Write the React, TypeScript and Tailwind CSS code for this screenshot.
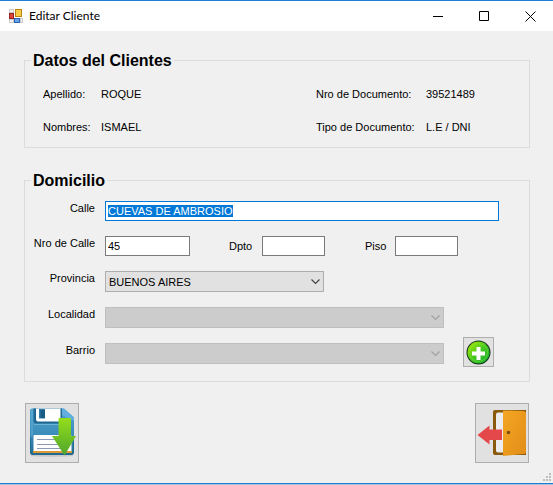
import { useEffect, useRef } from "react";
import type { ComponentProps, ReactNode } from "react";

function WindowButton({ label, children }: { label: string; children: ReactNode }) {
  return (
    <button type="button" aria-label={label} className="flex h-full w-[46px] items-center justify-center">
      <svg width="11" height="11" viewBox="0 0 11 11" fill="none" stroke="#000">
        {children}
      </svg>
    </button>
  );
}

function TitleBar() {
  return (
    <header className="flex h-[31px] items-center border-t border-[#1a7fd4] bg-white pl-[9px]">
      <svg width="14" height="14" viewBox="0 0 14 14" shapeRendering="crispEdges" aria-hidden="true">
        <path d="M0 0h5v4H0zM0 10h5v4H0zM11 9h3v5h-3z" fill="#c9c9c9" />
        <path d="M1 1h3v2H1zM1 11h3v2H1zM12 10h1v3h-1z" fill="#f4f4f4" />
        <rect x="0" y="4" width="5" height="6" fill="#9c1f1f" />
        <rect x="1" y="5" width="3" height="4" fill="#d8463c" />
        <rect x="6" y="0" width="7" height="8" fill="#b98510" />
        <rect x="7" y="1" width="5" height="6" fill="#fccb45" />
        <rect x="5" y="9" width="6" height="5" fill="#2f63b8" />
        <rect x="6" y="10" width="4" height="3" fill="#6aa0e8" />
      </svg>
      <h1 className="ml-[6px] flex-1 font-['Lato','Open_Sans',sans-serif] text-[12px] leading-4">
        Editar Cliente
      </h1>
      <WindowButton label="Minimizar">
        <path d="M0 5.5h10" />
      </WindowButton>
      <WindowButton label="Maximizar">
        <path d="M.5 .5h9v9h-9z" />
      </WindowButton>
      <WindowButton label="Cerrar">
        <path d="M.5 .5l10 10M10.500 .5l-10 10" strokeWidth="1" />
      </WindowButton>
    </header>
  );
}

function GroupBox({ title, children }: { title: string; children: ReactNode }) {
  return (
    <fieldset className="border border-[#dcdcdc]">
      <legend className="ml-[6px] px-[2px] text-[16px] leading-[19px] font-bold">
        {title}
      </legend>
      {children}
    </fieldset>
  );
}

function Field({ id, label, children }: { id: string; label: string; children: ReactNode }) {
  return (
    <div className="flex items-start gap-[10px]">
      <label htmlFor={id} className="w-[70px] shrink-0 text-right leading-[14px]">
        {label}
      </label>
      {children}
    </div>
  );
}

function TextBox({ className, ...props }: ComponentProps<"input">) {
  return (
    <input
      type="text"
      className={`h-5 border bg-white px-[2px] leading-[14px] outline-none selection:bg-[#0078d7] selection:text-white ${className}`}
      {...props}
    />
  );
}

function ComboBox({ id, value, className, disabled }: { id: string; value?: string; className: string; disabled?: boolean }) {
  return (
    <div className={`relative ${className}`}>
      <select
        id={id}
        disabled={disabled}
        className="block h-[21px] w-full appearance-none border border-[#adadad] bg-[#e1e1e1] px-[3px] leading-[14px] disabled:border-[#bfbfbf] disabled:bg-[#cccccc] disabled:opacity-100"
      >
        {value && <option>{value}</option>}
      </select>
      <svg
        className={`pointer-events-none absolute top-[8px] right-[4px] ${disabled ? "text-[#a0a0a0]" : "text-[#444444]"}`}
        width="9"
        height="6"
        viewBox="0 0 9 6"
        fill="none"
        stroke="currentColor"
        strokeWidth="1.2"
        aria-hidden="true"
      >
        <path d="M.5 .5l4 4 4-4" />
      </svg>
    </div>
  );
}

function AddIcon() {
  return (
    <svg width="25" height="25" viewBox="0 0 25 25" aria-hidden="true">
      <defs>
        <linearGradient id="add" x1="0" y1="0" x2="1" y2="1">
          <stop offset="0" stopColor="#b4f000" />
          <stop offset=".5" stopColor="#45c820" />
          <stop offset="1" stopColor="#08a838" />
        </linearGradient>
      </defs>
      <circle cx="12.5" cy="12.5" r="12" fill="#16301a" />
      <circle cx="12.5" cy="12.5" r="11" fill="url(#add)" />
      <circle cx="12.5" cy="12.5" r="9" fill="none" stroke="#7fe030" strokeOpacity=".6" />
      <path d="M10.500 7h4v4.500H19v4h-4.500V20h-4v-4.500H6v-4h4.500z" fill="#fff" />
    </svg>
  );
}

function SaveIcon() {
  return (
    <svg width="48" height="50" viewBox="0 0 48 50" aria-hidden="true">
      <defs>
        <linearGradient id="disk" x1="0" y1="0" x2="0" y2="1">
          <stop offset="0" stopColor="#4fa3cf" />
          <stop offset=".6" stopColor="#3a8bb8" />
          <stop offset="1" stopColor="#24678f" />
        </linearGradient>
        <linearGradient id="arrow" x1="0" y1="0" x2="0" y2="1">
          <stop offset="0" stopColor="#95de1c" />
          <stop offset="1" stopColor="#4fa52c" />
        </linearGradient>
      </defs>
      <ellipse cx="24" cy="47.500" rx="22" ry="1.500" fill="#c9c9c9" />
      <path d="M4 .5h31q1 0 2 1l8 7q1 1 1 2V44q0 3-3 3H5q-3 0-3-3V2.500q0-2 2-2z" fill="url(#disk)" />
      <path d="M2.500 30v14q0 2.500 2.500 2.500h38q2.500 0 2.500-2.500V30" fill="none" stroke="#1f6a92" />
      <path d="M34 .5h2l10 9V13L34 7z" fill="#62aee0" />
      <path d="M4 2v26" stroke="#62add4" />
      <path d="M5.500 .5v12q0 3 3 3H34V.5z" fill="#1d6791" />
      <path d="M6 16.500h25" stroke="#6db4d8" />
      <path d="M8 .5h24.500v12q0 1-1 1H10q-2 0-2-2z" fill="#fff" />
      <path d="M11 1h6v9.500h-6z" fill="#2c7ba5" />
      <path d="M12.500 2H17v8h-4.500z" fill="#195c83" />
      <path d="M6.500 27h36q1 0 1 1v17h-38V28q0-1 1-1z" fill="#fff" />
      <path d="M5 44h39" stroke="#dc9a35" strokeWidth="2" />
      <path d="M9 31.500h26M9 36.500h26M9 40.500h26" stroke="#8e9ab4" />
      <path d="M31.500 10H42q1 0 1 1v17h5L36.500 47.500 24 28h6.500V11q0-1 1-1z" fill="url(#arrow)" />
    </svg>
  );
}

function ExitIcon() {
  return (
    <svg width="50" height="48" viewBox="0 0 50 48" aria-hidden="true">
      <defs>
        <linearGradient id="door" x1="0" y1="0" x2="1" y2="1">
          <stop offset="0" stopColor="#f5a623" />
          <stop offset="1" stopColor="#e08d18" />
        </linearGradient>
      </defs>
      <path d="M18 1h31v45H18q-2 0-2-2V3q0-2 2-2z" fill="#8a5a0c" />
      <path d="M21 3.500h9v40h-9q-2 0-2-2v-36q0-2 2-2z" fill="#ececee" />
      <path d="M27 1.500l19 .5q3 0 3 3v38q0 2-3 2l-20 2V1.500z" fill="url(#door)" />
      <circle cx="31.500" cy="23.500" r="1.800" fill="#7a4f10" />
      <path d="M.5 26l12-9.500v4H25V31H12.500v4.500z" fill="#e5484b" />
    </svg>
  );
}

function SizeGrip() {
  return (
    <svg className="absolute right-[2px] bottom-[2px]" width="8" height="8" viewBox="0 0 8 8" aria-hidden="true">
      <path d="M6 0h2v2H6zM3 3h2v2H3zM6 3h2v2H6zM0 6h2v2H0zM3 6h2v2H3zM6 6h2v2H6z" fill="#bdbdbd" />
    </svg>
  );
}

export default function App() {
  const street = useRef<HTMLInputElement>(null);

  useEffect(() => {
    street.current?.focus();
    street.current?.select();
  }, []);

  return (
    <div className="flex min-h-screen flex-col border-b border-[#a3c3de] bg-[#f0f0f0] font-['Liberation_Sans',sans-serif] text-[11px] text-black">
      <TitleBar />
      <main className="relative flex-1 border-b border-[#1a7fd4] pt-5 pr-[23px] pb-5 pl-6">
        <GroupBox title="Datos del Clientes">
          <dl className="grid grid-cols-[58px_1fr_110px_103px] gap-y-[17px] pt-4 pb-3 pl-[18px] leading-4">
            <dt>Apellido:</dt>
            <dd>ROQUE</dd>
            <dt>Nro de Documento:</dt>
            <dd>39521489</dd>
            <dt>Nombres:</dt>
            <dd>ISMAEL</dd>
            <dt>Tipo de Documento:</dt>
            <dd>L.E / DNI</dd>
          </dl>
        </GroupBox>

        <form className="mt-[23px]" onSubmit={(event) => event.preventDefault()}>
          <GroupBox title="Domicilio">
            <div className="flex flex-col gap-[15px] pt-[11px] pr-[30px] pb-[17px]">
              <Field id="calle" label="Calle">
                <TextBox
                  ref={street}
                  id="calle"
                  defaultValue="CUEVAS DE AMBROSIO"
                  className="min-w-0 flex-1 border-[#0078d7]"
                />
              </Field>
              <Field id="numero" label="Nro de Calle">
                <TextBox id="numero" defaultValue="45" className="w-[85px] border-[#7a7a7a]" />
                <div className="ml-[29px] flex items-center">
                  <label htmlFor="dpto" className="w-[33px] leading-[14px]">Dpto</label>
                  <TextBox id="dpto" className="w-[63px] border-[#7a7a7a]" />
                </div>
                <div className="ml-[30px] flex items-center">
                  <label htmlFor="piso" className="w-[30px] leading-[14px]">Piso</label>
                  <TextBox id="piso" className="w-[63px] border-[#7a7a7a]" />
                </div>
              </Field>
              <Field id="provincia" label="Provincia">
                <ComboBox id="provincia" value="BUENOS AIRES" className="w-[219px]" />
              </Field>
              <Field id="localidad" label="Localidad">
                <ComboBox id="localidad" className="w-[339px]" disabled />
              </Field>
              <Field id="barrio" label="Barrio">
                <ComboBox id="barrio" className="w-[339px]" disabled />
                <button
                  type="button"
                  aria-label="Agregar barrio"
                  className="-my-[6px] ml-[9px] flex h-[30px] w-[31px] items-center justify-center border border-[#adadad] bg-[#e1e1e1]"
                >
                  <AddIcon />
                </button>
              </Field>
            </div>
          </GroupBox>

          <div className="mt-[21px] flex justify-between px-px">
            <button
              type="submit"
              aria-label="Guardar"
              className="flex h-[60px] w-[54px] items-center justify-center border border-[#adadad] bg-[#e1e1e1]"
            >
              <SaveIcon />
            </button>
            <button
              type="button"
              aria-label="Salir"
              className="flex h-[60px] w-[54px] items-center justify-center border border-[#adadad] bg-[#e1e1e1]"
            >
              <ExitIcon />
            </button>
          </div>
        </form>
        <SizeGrip />
      </main>
    </div>
  );
}
